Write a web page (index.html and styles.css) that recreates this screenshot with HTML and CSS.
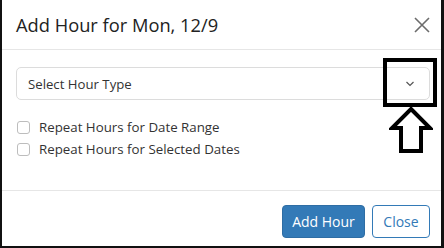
FILE: index.html
```html
<!DOCTYPE html>
<html lang="en">
<head>
    <meta charset="UTF-8">
    <title>Add Hour</title>
    <link rel="stylesheet" href="styles.css">
</head>
<body>
    <div class="frame">
        <div class="modal-header">
            <h4 class="modal-title">Add Hour for Mon, 12/9</h4>
            <button class="close" aria-label="Close">
                <svg width="18" height="18" viewBox="0 0 18 18"><path d="M2 2 L16 16 M16 2 L2 16" stroke="#6c6c6c" stroke-width="1.6" fill="none"/></svg>
            </button>
        </div>
        <div class="modal-body">
            <div class="select-row">
                <div class="select">
                    <span>Select Hour Type</span>
                    <svg class="chevron" width="10" height="6" viewBox="0 0 10 6"><path d="M1.5 1 L5 4.5 L8.5 1" stroke="#555" stroke-width="1.2" fill="none"/></svg>
                </div>
                <div class="highlight"></div>
                <svg class="arrow" width="44" height="48" viewBox="0 0 44 48">
                    <polygon points="22,3 41,22 32,22 32,45 12,45 12,22 3,22" fill="#fff" stroke="#000" stroke-width="4" stroke-linejoin="miter"/>
                </svg>
            </div>
            <label class="check"><span class="box"></span>Repeat Hours for Date Range</label>
            <label class="check"><span class="box"></span>Repeat Hours for Selected Dates</label>
        </div>
        <div class="modal-footer">
            <button class="btn btn-primary">Add Hour</button>
            <button class="btn btn-outline">Close</button>
        </div>
    </div>
</body>
</html>
```

FILE: styles.css
```css
body {
    margin: 0;
    background: #fff;
    font-family: 'Open Sans', 'Noto Sans', Arial, sans-serif;
    color: #212529;
}
.frame {
    width: 444px;
    height: 248px;
    box-sizing: border-box;
    border-left: 2px solid #111;
    border-right: 3px solid #111;
    border-bottom: 2px solid #111;
    display: flex;
    flex-direction: column;
}
.modal-header {
    height: 50px;
    box-sizing: border-box;
    border-bottom: 1px solid #e6e6e6;
    display: flex;
    align-items: center;
    justify-content: space-between;
    padding: 0 10px 0 14px;
}
.modal-title {
    margin: 0;
    font-size: 18.3px;
    font-weight: 400;
    color: #222;
}
.close {
    background: none;
    border: none;
    padding: 0;
    width: 18px;
    height: 18px;
    cursor: pointer;
}
.modal-body {
    flex: 1;
    padding: 17px 11px 0 14px;
}
.select-row {
    position: relative;
}
.select {
    height: 33px;
    box-sizing: border-box;
    border: 1px solid #dcdcdc;
    border-radius: 5px;
    display: flex;
    align-items: center;
    justify-content: space-between;
    padding: 0 14px 0 11px;
    font-size: 13.2px;
    color: #333;
}
.highlight {
    position: absolute;
    left: 367px;
    top: -9px;
    width: 54px;
    height: 49px;
    box-sizing: border-box;
    border: 4px solid #000;
}
.arrow {
    position: absolute;
    left: 373px;
    top: 39px;
}
.check {
    display: flex;
    align-items: center;
    font-size: 13.3px;
    color: #333;
    height: 22px;
}
.check:first-of-type {
    margin-top: 16px;
}
.box {
    width: 11px;
    height: 11px;
    border: 1px solid #bdbdbd;
    border-radius: 3px;
    margin: 0 9px 0 1px;
}
.modal-footer {
    height: 56px;
    box-sizing: border-box;
    border-top: 1px solid #e6e6e6;
    display: flex;
    justify-content: flex-end;
    align-items: flex-start;
    gap: 7px;
    padding: 14px 11px 0 0;
}
.btn {
    height: 33px;
    border-radius: 4px;
    font-family: inherit;
    font-size: 14px;
    padding: 0;
    cursor: pointer;
}
.btn-primary {
    background: #337ab7;
    border: 1px solid #2e6da4;
    color: #fff;
    width: 83px;
}
.btn-outline {
    background: #fff;
    border: 1px solid #337ab7;
    color: #337ab7;
    width: 58px;
}
```
